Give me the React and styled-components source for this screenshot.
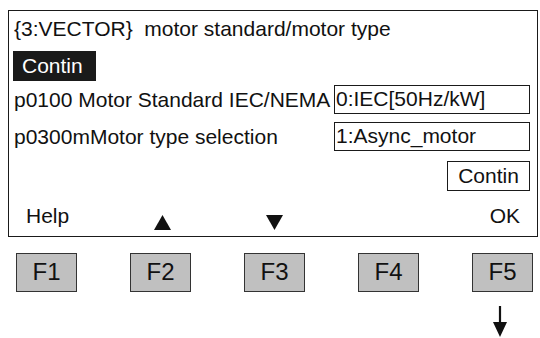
import React from "react"
import styled, {createGlobalStyle} from "styled-components"

const Global = createGlobalStyle`
  body {
    margin: 0;
    background: #ffffff;
    font-family: "Liberation Sans", Arial, sans-serif;
    color: #111111;
  }
`

const Page = styled.div`
  width: 540px;
  height: 338px;
  padding: 10px 0 0 8px;
  box-sizing: border-box;
`

const Screen = styled.div`
  width: 530px;
  height: 227px;
  box-sizing: border-box;
  border: 1.5px solid #1a1a1a;
  padding: 5px 7px 0 5px;
  display: flex;
  flex-direction: column;
  font-size: 21px;
`

const Title = styled.div`
  height: 26px;
  line-height: 26px;
  white-space: pre;
`

const Dark = styled.div`
  align-self: flex-start;
  background: #1a1a1a;
  color: #ffffff;
  width: 83px;
  height: 30px;
  line-height: 30px;
  padding-left: 9px;
  margin-left: -1px;
  box-sizing: border-box;
  margin-top: 9px;
`

const Row = styled.div`
  display: flex;
  align-items: center;
  justify-content: space-between;
  height: 29px;
  margin-top: ${p => p.$top}px;
`

const Field = styled.div`
  width: 196px;
  height: 29px;
  box-sizing: border-box;
  border: 1.5px solid #1a1a1a;
  line-height: 26px;
  padding-left: 1px;
  white-space: nowrap;
`

const Outline = styled.div`
  align-self: flex-end;
  width: 83px;
  height: 30px;
  box-sizing: border-box;
  border: 1.5px solid #1a1a1a;
  line-height: 27px;
  text-align: center;
  margin-top: 10px;
`

const Softkeys = styled.div`
  display: grid;
  grid-template-columns: 128px 112px 1fr 60px;
  align-items: center;
  padding-left: 12px;
  margin-top: 10px;
  height: 26px;
`

const Tri = styled.svg`
  display: block;
  margin-top: 14px;
`

const Ok = styled.span`
  text-align: right;
  padding-right: 10px;
`

const Keys = styled.div`
  display: flex;
  gap: 53px;
  padding-left: 8px;
  margin-top: 16px;
`

const Key = styled.div`
  width: 61px;
  height: 39px;
  box-sizing: border-box;
  background: #c0c0c0;
  border: 1.5px solid #333333;
  font-size: 24px;
  line-height: 36px;
  text-align: center;
`

const Arrow = styled.svg`
  display: block;
  margin: 14px 0 0 484px;
`

const Up = () => (
  <Tri width="17" height="15" viewBox="0 0 17 15">
    <polygon points="8.5,0 17,15 0,15" fill="#111" />
  </Tri>
)

const Down = () => (
  <Tri width="17" height="15" viewBox="0 0 17 15">
    <polygon points="0,0 17,0 8.5,15" fill="#111" />
  </Tri>
)

export default () => (
  <Page>
    <Global />
    <Screen>
      <Title>{"{3:VECTOR}  motor standard/motor type"}</Title>
      <Dark>Contin</Dark>
      <Row $top={4}>
        <span>p0100 Motor Standard IEC/NEMA</span>
        <Field>0:IEC[50Hz/kW]</Field>
      </Row>
      <Row $top={8}>
        <span>p0300mMotor type selection</span>
        <Field>1:Async_motor</Field>
      </Row>
      <Outline>Contin</Outline>
      <Softkeys>
        <span>Help</span>
        <Up />
        <Down />
        <Ok>OK</Ok>
      </Softkeys>
    </Screen>
    <Keys>
      {["F1", "F2", "F3", "F4", "F5"].map(k => <Key key={k}>{k}</Key>)}
    </Keys>
    <Arrow width="16" height="31" viewBox="0 0 16 31">
      <line x1="8" y1="0" x2="8" y2="18" stroke="#111" strokeWidth="2.2" />
      <polygon points="1,16 15,16 8,31" fill="#111" />
    </Arrow>
  </Page>
)
